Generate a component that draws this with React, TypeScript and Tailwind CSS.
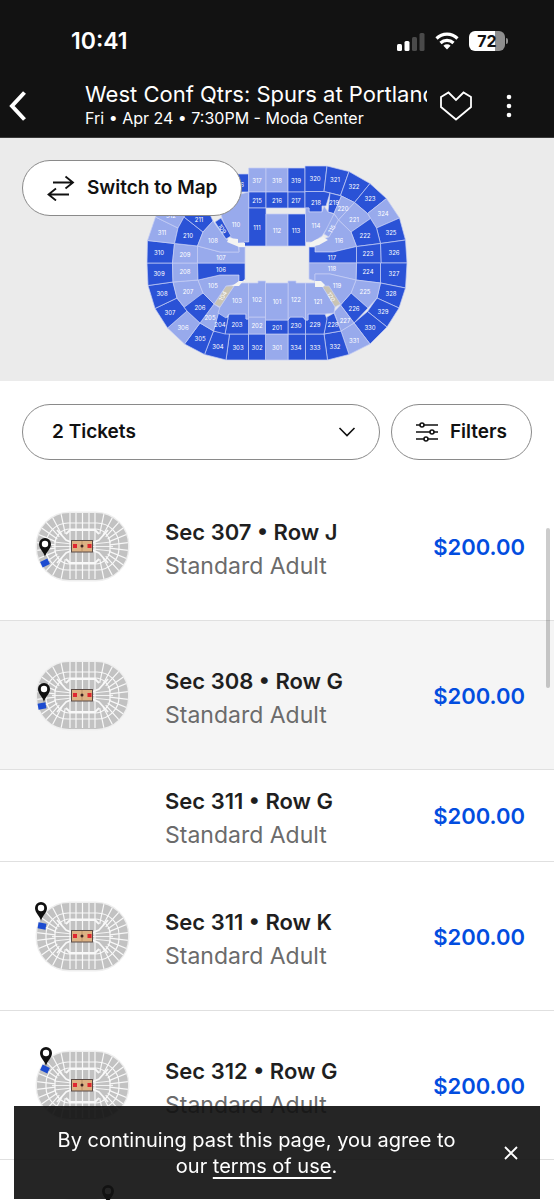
// app.tsx
import React, { useState } from 'react';

type Tone = 'dark' | 'light' | 'beige';
type Section = [name: string, tone: Tone, points: string, x: number, y: number, angle?: number];

const fills: Record<Tone, string> = { dark: '#2a52d6', light: '#98aaec', beige: '#c9c4b4' };

const sections: Section[] = [
  // upper bowl
  ['316', 'dark', '228,174 248.7,174 248.7,192 230,192', 239, 185],
  ['317', 'light', '248.7,168 266,168 266,192 248.7,192', 257, 181],
  ['318', 'light', '266,168 288,168 288,192 266,192', 277, 181],
  ['319', 'dark', '288,168 305,168 305,192 288,192', 296, 181],
  ['320', 'dark', '305,166 327,166 324,191.5 305,191.5', 315, 179],
  ['321', 'dark', '327,166 349,171.5 340.5,195.5 324,191.5', 335, 180],
  ['322', 'dark', '349,171.5 370,183.5 354.5,202.5 340.5,195.5', 354, 187],
  ['323', 'dark', '370,183.5 386.5,198.5 367.5,213.5 354.5,202.5', 370, 199],
  ['324', 'light', '386.5,198.5 399.5,218 376.5,228 367.5,213.5', 383, 214],
  ['325', 'dark', '399.5,218 405.5,240 380.5,243.5 376.5,228', 391, 233],
  ['326', 'dark', '405.5,240 407,263 381,263 380.5,243.5', 394, 253],
  ['327', 'dark', '380.5,263 407,263 405.5,288 380.5,283', 394, 274],
  ['328', 'dark', '380.5,283 405.5,288 399,308 377,298', 391, 294],
  ['329', 'dark', '377,298 399,308 387,327 367.5,311.5', 383, 312],
  ['330', 'dark', '367.5,311.5 387,327 370,344 354,323', 370, 328],
  ['331', 'light', '354,323 370,344 349,354.5 341,331', 354, 341],
  ['332', 'dark', '341,331 349,354.5 327.5,360 324,334', 335, 347],
  ['333', 'dark', '305.5,334 324,334 327.5,360 305.5,360', 315, 348],
  ['334', 'dark', '288,334 305.5,334 305.5,360 288,360', 296, 348],
  ['301', 'light', '265.5,334 288,334 288,360 265.5,360', 277, 348],
  ['302', 'dark', '248.5,334 265.5,334 265.5,360 248.5,360', 257, 348],
  ['303', 'dark', '229.5,334 248.5,334 248.5,360 226,360', 238, 348],
  ['304', 'dark', '213.5,331 229.5,334 226,360 204.5,354.5', 218, 347],
  ['305', 'dark', '200,323 213.5,331 204.5,354.5 184.5,344', 200, 339],
  ['306', 'light', '187,311 200,323 184.5,344 167.5,328', 183, 328],
  ['307', 'dark', '177,298 187,311 167.5,328 155,308.5', 170, 313],
  ['308', 'dark', '173,282 177,298 155,308.5 148,285.5', 162, 294],
  ['309', 'dark', '147,263 172.5,263 173,282 148,285.5', 159, 274],
  ['310', 'dark', '147.5,240.5 174.5,243.5 172.5,263 147,263', 159, 253],
  ['311', 'light', '155.5,217 178,228 174.5,243.5 147.5,240.5', 162, 233],
  ['312', 'light', '155.5,217 170,198 190,208 184,217 178,228', 171, 216],
  // middle ring
  ['215', 'dark', '248.7,192 266,192 266,208 248.7,208', 257, 201],
  ['216', 'dark', '266,192 288,192 288,208 266,208', 277, 201],
  ['217', 'dark', '288,192 305,192 305,208 288,208', 296, 201],
  ['218', 'dark', '305,191.5 324,191.5 330,193 326,206 322,206 322,212 309,212 309,208 305,208', 316, 203],
  ['219', 'dark', '330,193 341.5,196 334,213.5 328,212', 334, 203],
  ['220', 'light', '341.5,196 354.5,202.5 338.5,220 334,213.5', 343, 209],
  ['221', 'light', '354.5,202.5 367.5,213.5 370.5,218.5 351,232 338.5,220', 354, 220],
  ['222', 'dark', '370.5,218.5 376.5,228 380.5,243.5 356.5,246.5 351,232', 365, 236],
  ['223', 'dark', '356.5,246.5 380.5,243.5 381,263 356.5,263', 368, 254],
  ['224', 'dark', '356.5,263 380.5,263 380.5,283 356,280', 368, 272],
  ['225', 'light', '356,280 380.5,283 377,298 368,308 351,293', 365, 292],
  ['226', 'dark', '351,293 368,308 354,323 340.5,305', 354, 309],
  ['227', 'light', '340.5,305 354,323 341,331 334,312', 345, 321],
  ['228', 'dark', '327,317 334,313 341,331 324,334', 333, 325],
  ['229', 'dark', '305.5,334 305.5,320 308,320 308,314 325,314 327,319 324,334', 315, 325],
  ['230', 'dark', '288,334 288,320 290,317 303,317 305.5,320 305.5,334', 296, 326],
  ['201', 'dark', '265.5,320 288,320 288,334 265.5,334', 277, 328],
  ['202', 'light', '248.5,317 265.5,317 265.5,334 248.5,334', 257, 326],
  ['203', 'dark', '225,334 228,318 229,314 246,314 246,319 248.5,319 248.5,334', 237, 325],
  ['204', 'dark', '213.5,331 218,313 224,315 228,318 225,334', 220, 325],
  ['205', 'light', '200,323 214,304 220,308 213.5,331', 210, 318],
  ['206', 'dark', '177,298 203,293 214,304 200,323 187,311', 200, 308],
  ['207', 'light', '173,282 198,280 203,293 184.5,307 177,298', 188, 292],
  ['208', 'light', '172.5,263 197.5,263 198,280 173,282', 185, 272],
  ['209', 'light', '174.5,243.5 197.5,246 197.5,263 172.5,263', 185, 255],
  ['210', 'dark', '184,217 203,232 197.5,246 174.5,243.5 178,228', 188, 236],
  ['211', 'dark', '184,217 190,206 208,210 213,221 203,232', 199, 220],
  // lower bowl
  ['110', 'light', '218,200 248.7,192 248.7,242 238,243 229,236 222,218', 236, 225],
  ['111', 'dark', '248.7,208 266,208 266,246 244,246 244,242 248.7,242', 257, 228],
  ['112', 'light', '266,214 288,214 288,246 266,246', 277, 231],
  ['113', 'dark', '288,214 305.5,214 305.5,246 288,246', 296, 231],
  ['114', 'light', '305.5,208 309,208 309,212 322,212 324,206 328,212 334,214 330,224 322,236 313,242 305.5,242', 316, 226],
  ['115', 'light', '334,214 338.5,220 329,237 324,234', 332, 229, -60],
  ['116', 'light', '315,242 329,237 338.5,220 351,232 356.5,246.5 333,252 315,252', 339, 241],
  ['117', 'dark', '309,247 315,247 315,252 333,252 356.5,246.5 356.5,263 309,263', 332, 258],
  ['118', 'light', '309,263 356.5,263 356,280 330,274 315,274 315,281 309,279', 332, 269],
  ['119', 'light', '315,274 330,274 356,280 351,293 340.5,305 328,287 315,283', 337, 286],
  ['120', 'beige', '322,286 329,286 340.5,304 335,307', 331, 297, 60],
  ['121', 'light', '305.5,283 315,283 322,286 335,307 334,313 325,314 308,314 308,320 305.5,320', 318, 302],
  ['122', 'light', '288,281 296,281 296,283 305.5,283 305.5,320 303,317 290,317 288,320', 296, 300],
  ['101', 'light', '265.5,283 288,283 288,320 265.5,320', 277, 302],
  ['102', 'light', '248.5,283 258,283 258,281 265.5,281 265.5,317 248.5,317', 257, 300],
  ['103', 'light', '234,286 238,283 248.5,283 248.5,319 246,319 246,314 229,314 226,318 218,313 220,307', 237, 301],
  ['104', 'beige', '226,286 234,286 220,307 214,304', 223, 296, -60],
  ['105', 'light', '198,280 220,275 239,275 239,284 226,286 214,304 203,293', 213, 286],
  ['106', 'dark', '197.5,263 245,263 245,280 239,283 239,275 220,275 198,280', 221, 270],
  ['107', 'light', '197.5,246 220,252 239,252 239,247 245,247 245,263 197.5,263', 221, 258],
  ['108', 'light', '213,221 226,239 238,243 239,252 220,252 197.5,246 203,232', 213, 241],
  ['109', 'dark', '215,222 221,218 231,236 226,239', 222, 229, 60],
];

interface Listing {
  sec: string;
  row: string;
  pin?: { x: number; y: number; px: number; py: number; tilt: number };
}

const listings: Listing[] = [
  { sec: '307', row: 'J', pin: { x: 21, y: 58, px: 21, py: 77, tilt: -25 } },
  { sec: '308', row: 'G', pin: { x: 20, y: 54, px: 18, py: 71, tilt: -10 } },
  { sec: '311', row: 'G' },
  { sec: '311', row: 'K', pin: { x: 17, y: 32, px: 18, py: 50, tilt: 10 } },
  { sec: '312', row: 'G', pin: { x: 22, y: 28, px: 21, py: 44, tilt: 25 } },
  { sec: '318', row: 'C', pin: { x: 84, y: 17, px: 84, py: 34, tilt: 0 } },
];

const ArenaMap = () => (
  <svg viewBox="146 165 262 197" className="w-[262px] h-[197px]" role="img" aria-label="Arena seating map">
    <g stroke="#c6cff5" strokeWidth="0.7">
      {sections.map(([name, tone, points]) => (
        <polygon key={name} points={points} fill={fills[tone]} />
      ))}
    </g>
    <path d="M229 238l9 1v4h7v4h-6l-12-5zM310 243l5-3 8-3 5 3-9 5-9 2zM239 281h6v-2l-6 7h-7zM315 281h6l4 4-2 2h-8z" fill="#f4f4f2" />
    <g fill="#fff" fontSize="6" textAnchor="middle">
      {sections.map(([name, , , x, y, angle]) => (
        <text key={name} x={x} y={y + 2} transform={angle ? `rotate(${angle} ${x} ${y})` : undefined}>{name}</text>
      ))}
    </g>
  </svg>
);

// angles of the aisles that fan out from both ends of the court
const aisles = [-78, -62, -48, -35, -22, -7, 7, 22, 35, 48, 62, 78];

const SeatThumb = ({ pin }: { pin: NonNullable<Listing['pin']> }) => (
  <svg viewBox="0 0 117 125" className="w-[117px] h-[125px] shrink-0" aria-hidden="true">
    <clipPath id="bowl">
      <rect x="13" y="27" width="91" height="67" rx="32" />
    </clipPath>
    <rect x="11.5" y="25.5" width="94" height="70" rx="34" fill="#efefef" />
    <g clipPath="url(#bowl)">
      <rect x="13" y="27" width="91" height="67" fill="#c2c2c2" />
      <g fill="none" stroke="#f8f8f8" strokeWidth="1.2">
        <rect x="22" y="37" width="73" height="47" rx="22" />
        <rect x="31" y="43" width="55" height="35" rx="15" />
        <path d="M46 27v66M52 27v66M58.5 27v66M65 27v66M71 27v66" />
        {aisles.map((a) => {
          const dx = Math.cos((a * Math.PI) / 180);
          const dy = Math.sin((a * Math.PI) / 180);
          return (
            <path
              key={a}
              d={`M${44 - dx * 13} ${60.5 + dy * 13}l${-dx * 40} ${dy * 40}M${73 + dx * 13} ${60.5 + dy * 13}l${dx * 40} ${dy * 40}`}
            />
          );
        })}
        <path d="M28 60.500h20M69 60.500h20M30 56l18 2M87 56l-18 2M30 65l18-2M87 65l-18-2" strokeWidth="0.9" />
        <path d="M33 44l9 10 7 3M84 44l-9 10-7 3M33 77l9-10 7-3M84 77l-9-10-7-3M42 48l4-4h25l4 4M42 73l4 4h25l4-4" strokeWidth="1.8" />
      </g>
    </g>
    <rect x="47.5" y="54.5" width="21" height="11.5" fill="#dcb183" stroke="#5b4b46" />
    <rect x="49" y="58" width="4" height="4" fill="#e02731" />
    <rect x="63.5" y="58" width="4" height="4" fill="#e02731" />
    <path d="M58 55v11" stroke="#a78258" strokeWidth="0.6" />
    <circle cx="58" cy="60" r="1.5" fill="#3b2020" />
    <rect x={pin.px - 4} y={pin.py - 3} width="8" height="6" fill="#1c4bd0" transform={`rotate(${pin.tilt} ${pin.px} ${pin.py})`} />
    <path
      d={`M${pin.x} ${pin.y + 13}c-1-5-6-8-6-13a6 6 0 0 1 12 0c0 5-5 8-6 13z`}
      fill="#101010"
    />
    <circle cx={pin.x} cy={pin.y} r="3.2" fill="#fff" />
  </svg>
);

const StatusBar = () => (
  <div className="flex items-center justify-between pl-[71px] pr-[46px] pt-[25px] h-[57px]">
    <span className="text-[23px] leading-8 font-semibold">10:41</span>
    <div className="flex items-center gap-[10px]">
      <svg viewBox="0 0 28 19" className="w-7 h-[19px]" aria-hidden="true">
        <rect x="0" y="12" width="5" height="7" rx="1.5" fill="#fff" />
        <rect x="7.5" y="9" width="5" height="10" rx="1.5" fill="#fff" />
        <rect x="15" y="5" width="5" height="14" rx="1.5" fill="#4a4a4a" />
        <rect x="22.5" y="1" width="5" height="18" rx="1.5" fill="#4a4a4a" />
      </svg>
      <svg viewBox="0 0 24 18" className="w-6 h-[18px]" fill="none" stroke="#fff" strokeWidth="3.2" aria-hidden="true">
        <path d="M1.5 6.5a15 15 0 0 1 21 0" />
        <path d="M5.5 11a9.5 9.5 0 0 1 13 0" />
        <path d="M12 17.5l-3.600-3.700a5.200 5.200 0 0 1 7.200 0z" fill="#fff" stroke="none" />
      </svg>
      <div className="flex items-center gap-px">
        <div className="w-9 h-5 rounded-[6px] bg-[linear-gradient(90deg,#fff_72%,#8e8e8e_72%)] text-[#111] text-base leading-5 font-bold text-center">
          72
        </div>
        <div className="w-[2px] h-[6px] rounded-r bg-[#8e8e8e]" />
      </div>
    </div>
  </div>
);

const App = () => {
  const [tickets, setTickets] = useState<string>('2');
  const [showTerms, setShowTerms] = useState<boolean>(true);

  return (
    <div className="flex flex-col h-screen overflow-hidden bg-white text-[#1f1f1f] font-['Inter',sans-serif]">
      <header className="shrink-0 bg-[#121212] text-white border-b border-[#3a3a3a]">
        <StatusBar />
        <div className="flex items-center h-20 pt-[18px] pl-[9px] pr-[42px]">
          <button type="button" aria-label="Back" className="mr-[59px] shrink-0">
            <svg viewBox="0 0 17 30" className="w-[17px] h-[30px]" fill="none" stroke="#fff" strokeWidth="4">
              <path d="M15.5 1.5L3 15l12.500 13.500" />
            </svg>
          </button>
          <div className="flex-1 min-w-0 pb-[2px]">
            <h1 className="text-[22px] leading-[26px] whitespace-nowrap overflow-hidden">West Conf Qtrs: Spurs at Portland</h1>
            <p className="text-base leading-[22px] whitespace-nowrap">Fri • Apr 24 • 7:30PM - Moda Center</p>
          </div>
          <button type="button" aria-label="Save event" className="ml-3 shrink-0">
            <svg viewBox="0 0 34 30" className="w-[34px] h-[30px]" fill="none" stroke="#fff" strokeWidth="1.8">
              <path d="M2 6L9.5 1.5l7.500 7.500 7.500-7.500L32 6v10L17 28.500 2 16z" />
            </svg>
          </button>
          <button type="button" aria-label="More options" className="ml-[33px] shrink-0">
            <svg viewBox="0 0 6 24" className="w-[6px] h-6" fill="#fff">
              <circle cx="3" cy="3" r="2.3" />
              <circle cx="3" cy="12" r="2.3" />
              <circle cx="3" cy="21" r="2.3" />
            </svg>
          </button>
        </div>
      </header>

      <section className="relative shrink-0 flex justify-center bg-[#ebebeb] pt-[27px] pb-[19px]">
        <ArenaMap />
        <button type="button" className="absolute left-[22px] top-[22px] flex items-center gap-3 h-14 px-6 rounded-full border border-[#8a8a8a] bg-white text-[#111] text-[19px] font-semibold">
          <svg viewBox="0 0 28 26" className="w-7 h-[26px]" fill="none" stroke="#111" strokeWidth="1.8" aria-hidden="true">
            <path d="M6 7.5h20M18.5 1.5l7.500 6-7.500 6M22 19.500H2M9 13.500l-7.500 6 7.500 6" />
          </svg>
          Switch to Map
        </button>
      </section>

      <section className="shrink-0 flex gap-[11px] px-[22px] pt-[23px] pb-3 text-[#111] text-[19px] font-semibold">
        <div className="relative flex-1">
          <select
            aria-label="Number of tickets"
            value={tickets}
            onChange={(e) => setTickets(e.target.value)}
            className="appearance-none w-full h-14 pl-[29px] pr-12 rounded-full border border-[#8a8a8a] bg-white"
          >
            <option value="1">1 Ticket</option>
            <option value="2">2 Tickets</option>
            <option value="3">3 Tickets</option>
            <option value="4">4 Tickets</option>
          </select>
          <svg viewBox="0 0 18 10" className="absolute right-6 top-[23px] w-[18px] h-[10px] pointer-events-none" fill="none" stroke="#111" strokeWidth="1.6" aria-hidden="true">
            <path d="M1.5 1L9 8.5 16.5 1" />
          </svg>
        </div>
        <button type="button" className="flex items-center justify-center gap-3 w-[141px] h-14 rounded-full border border-[#8a8a8a] bg-white">
          <svg viewBox="0 0 22 20" className="w-[22px] h-5" stroke="#111" strokeWidth="1.6" aria-hidden="true">
            <path d="M0 3h22M0 10h22M0 17h22" />
            <circle cx="6" cy="3" r="2" fill="#fff" />
            <circle cx="16" cy="10" r="2" fill="#fff" />
            <circle cx="10" cy="17" r="2" fill="#fff" />
          </svg>
          Filters
        </button>
      </section>

      <main className="relative flex-1 min-h-0 overflow-hidden">
        <ul>
          {listings.map(({ sec, row, pin }) => (
            <li
              key={sec + row}
              className={`flex items-center pt-[14px] pb-[9px] pl-6 pr-[29px] border-b border-[#e0e0e0] ${sec === '308' ? 'bg-[#f5f5f5]' : 'bg-white'}`}
            >
              {pin ? <SeatThumb pin={pin} /> : <div className="w-[117px] shrink-0" />}
              <div className="flex-1 ml-6 leading-[34px]">
                <h2 className="text-[22px] font-semibold">Sec {sec} • Row {row}</h2>
                <p className="text-[23px] text-[#6b6b6b]">Standard Adult</p>
              </div>
              <span className="mb-1 text-[22px] leading-[34px] font-semibold text-[#024ddf]">$200.00</span>
            </li>
          ))}
        </ul>
        <div className="absolute right-1 top-14 w-1 h-40 rounded-full bg-black/20" />
      </main>

      {showTerms && (
        <div className="fixed bottom-px inset-x-[14px] flex items-center h-[93px] pl-9 pr-[21px] bg-[#121212]/92 text-white">
          <p className="flex-1 text-center text-[20px] leading-[26px]">
            By continuing past this page, you agree to our <a href="#terms" className="underline underline-offset-4">terms of use</a>.
          </p>
          <button type="button" aria-label="Dismiss" onClick={() => setShowTerms(false)} className="ml-10 shrink-0">
            <svg viewBox="0 0 16 16" className="w-4 h-4" stroke="#fff" strokeWidth="1.8">
              <path d="M2 2l12 12M14 2L2 14" />
            </svg>
          </button>
        </div>
      )}
    </div>
  );
};

export default App
